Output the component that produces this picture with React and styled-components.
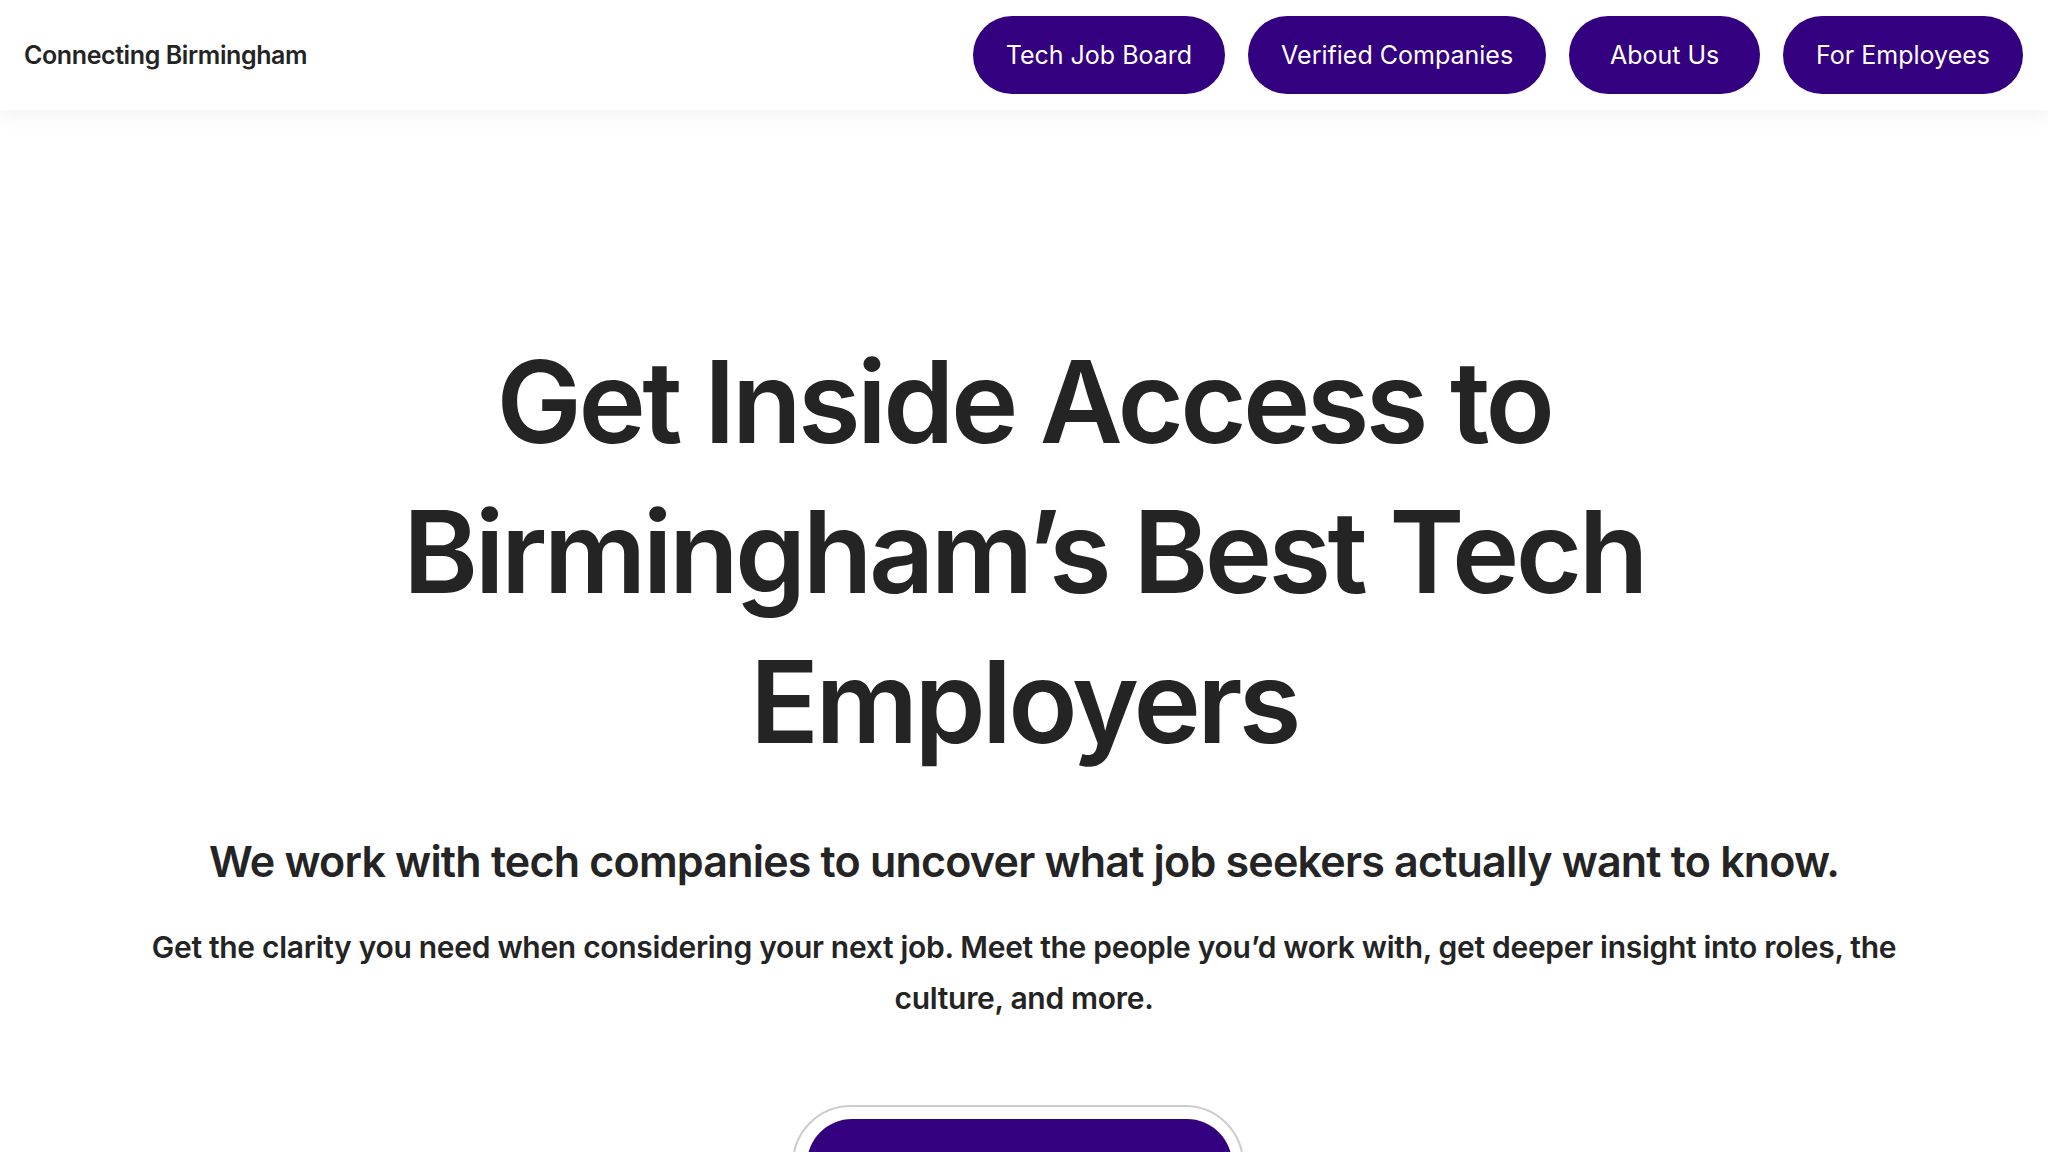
import styled, { createGlobalStyle } from "styled-components";

const GlobalStyle = createGlobalStyle`
  body {
    margin: 0;
    background: #ffffff;
    font-family: Inter, "Noto Sans", sans-serif;
    color: #242424;
  }
`;

const Header = styled.header`
  height: 110px;
  padding: 0 25px 0 24px;
  display: flex;
  align-items: center;
  justify-content: space-between;
  background: #ffffff;
  box-shadow: 0 6px 20px rgba(0, 0, 0, 0.05);
  position: relative;
`;

const Logo = styled.a`
  font-size: 25px;
  font-weight: 600;
  letter-spacing: -0.4px;
  color: #242424;
  text-decoration: none;
`;

const Nav = styled.nav`
  display: flex;
  gap: 23px;
`;

const NavButton = styled.a`
  height: 78px;
  min-width: 191px;
  box-sizing: border-box;
  padding: 0 33px;
  display: flex;
  align-items: center;
  justify-content: center;
  border-radius: 40px;
  background: #330080;
  color: #ffffff;
  font-size: 25px;
  font-weight: 400;
  text-decoration: none;
`;

const Hero = styled.main`
  display: flex;
  flex-direction: column;
  align-items: center;
  text-align: center;
  padding: 217px 40px 0;
`;

const Title = styled.h1`
  margin: 0;
  max-width: 1400px;
  font-size: 114px;
  line-height: 150px;
  font-weight: 600;
  letter-spacing: -3.6px;
  color: #242424;
`;

const Lead = styled.h2`
  margin: 56px 0 0;
  font-size: 43px;
  line-height: 57px;
  font-weight: 600;
  letter-spacing: -0.8px;
`;

const Body = styled.p`
  margin: 32px 0 0;
  max-width: 1800px;
  font-size: 30px;
  line-height: 51px;
  font-weight: 600;
  letter-spacing: -0.3px;
`;

const CtaRing = styled.div`
  margin-top: 81px;
  margin-right: 12px;
  padding: 12px 10px 12px 13px;
  border: 2px solid #cccccc;
  border-radius: 60px;
`;

const CtaButton = styled.a`
  display: block;
  width: 425px;
  height: 90px;
  border-radius: 50px;
  background: #330080;
`;

export default function App() {
  return (
    <>
      <GlobalStyle />
      <Header>
        <Logo href="#">Connecting Birmingham</Logo>
        <Nav>
          <NavButton href="#">Tech Job Board</NavButton>
          <NavButton href="#">Verified Companies</NavButton>
          <NavButton href="#">About Us</NavButton>
          <NavButton href="#">For Employees</NavButton>
        </Nav>
      </Header>
      <Hero>
        <Title>Get Inside Access to Birmingham’s Best Tech Employers</Title>
        <Lead>We work with tech companies to uncover what job seekers actually want to know.</Lead>
        <Body>
          Get the clarity you need when considering your next job. Meet the people you’d work with, get
          deeper insight into roles, the culture, and more.
        </Body>
        <CtaRing>
          <CtaButton href="#" />
        </CtaRing>
      </Hero>
    </>
  );
}
